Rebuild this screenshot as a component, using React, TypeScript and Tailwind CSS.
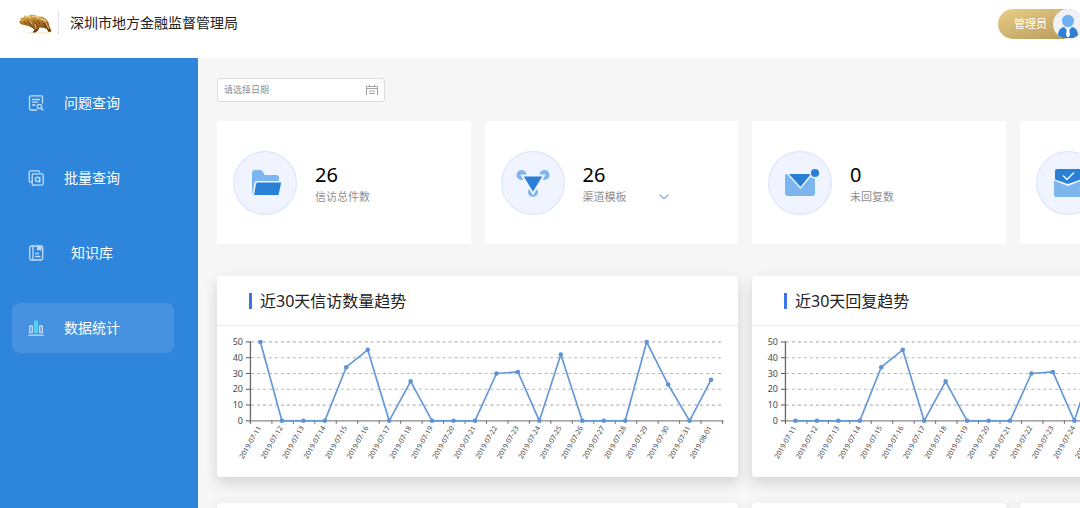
import type { ReactNode } from "react";
import clsx from "clsx";

const dates = [
  "2019-07-11", "2019-07-12", "2019-07-13", "2019-07-14", "2019-07-15", "2019-07-16",
  "2019-07-17", "2019-07-18", "2019-07-19", "2019-07-20", "2019-07-21", "2019-07-22",
  "2019-07-23", "2019-07-24", "2019-07-25", "2019-07-26", "2019-07-27", "2019-07-28",
  "2019-07-29", "2019-07-30", "2019-07-31", "2019-08-01",
];

const visits = [50, 0, 0, 0, 34, 45, 0, 25, 0, 0, 0, 30, 31, 0, 42, 0, 0, 0, 50, 23, 0, 26];
const replies = [0, 0, 0, 0, 34, 45, 0, 25, 0, 0, 0, 30, 31, 0, 42, 0, 0, 0, 50, 23, 0, 26];

function BullLogo() {
  return (
    <svg viewBox="0 0 34 22" className="h-[22px] w-[34px]" aria-hidden="true">
      <defs>
        <linearGradient id="bull" x1="0" y1="0" x2="0.2" y2="1">
          <stop offset="0" stopColor="#e3b55c" />
          <stop offset="0.5" stopColor="#b27a28" />
          <stop offset="1" stopColor="#69390f" />
        </linearGradient>
      </defs>
      <path d="M9 20.800h24" stroke="#f6e8ca" strokeWidth="1.200" />
      <path
        d="M1 9.500 3 8 2.500 5.500 5 6 7 3.500 10.500 4 13 2.500 17 3 20 4.500 24 4.800 28 7 30.500 10.500 31.500 14.500 33.500 19.500 30.500 20 28.500 16.800 25 15.800 21.500 15.500 20 18.500 17.500 20.500 14.500 20.500 16.500 17.500 13.500 15.500 10 14 6 13 2.500 12Z"
        fill="url(#bull)"
      />
      <path d="M7 5q4-1 6 1M14 4.500q4-1 7 2M22 7q4 0 6 3" stroke="#f6d894" strokeWidth="1.200" fill="none" />
      <path d="M5 9l4 3M9 8l4 5M15 8l4 5M19 8l3 4M25 11l4 4" stroke="#67370f" strokeWidth="1" fill="none" />
      <path d="M4 8l2 1M11 9l3 3M17 12l1 5M28 11l3 6" stroke="#eabb66" strokeWidth="1" fill="none" />
    </svg>
  );
}

function Avatar() {
  return (
    <svg viewBox="0 0 30 30" className="size-[30px] shrink-0" aria-hidden="true">
      <defs>
        <clipPath id="avatar">
          <circle cx="15" cy="15" r="15" />
        </clipPath>
      </defs>
      <circle cx="15" cy="15" r="15" fill="#f1f2f5" />
      <g clipPath="url(#avatar)">
        <path d="M5 29v-3q0-6 5.500-8h9q5.500 2 5.500 8v3Z" fill="#2f80d5" />
        <path d="M10.500 17.500h9L15 22Z" fill="#f1f2f5" />
        <path d="M14 18.500h2l1 8-2 2-2-2Z" fill="#fff" />
        <ellipse cx="15" cy="12" rx="6" ry="6.200" fill="#6fb0f3" />
      </g>
    </svg>
  );
}

function SidebarIcon({ children }: { children: ReactNode }) {
  return (
    <svg
      viewBox="0 0 16 16"
      className="size-4 shrink-0"
      fill="none"
      stroke="#c5def7"
      strokeWidth="1.300"
      strokeLinecap="round"
      strokeLinejoin="round"
      aria-hidden="true"
    >
      {children}
    </svg>
  );
}

const menu = [
  {
    name: "问题查询",
    icon: (
      <SidebarIcon>
        <path d="M14.500 8V1.800a1 1 0 0 0-1-1H3a1.500 1.500 0 0 0-1.500 1.500v11.200A1.500 1.500 0 0 0 3 15h5.500" />
        <path d="M4.500 4.500h7M4.500 7.200h5M4.500 10h2.500" />
        <circle cx="11.500" cy="11.500" r="2.200" />
        <path d="m13.200 13.200 1.800 1.800" />
      </SidebarIcon>
    ),
  },
  {
    name: "批量查询",
    icon: (
      <SidebarIcon>
        <path d="M3.500 12.200h-.8A1.500 1.500 0 0 1 1.200 10.700V2.200A1.500 1.500 0 0 1 2.700.8h7.500a1.500 1.500 0 0 1 1.500 1.400" />
        <rect x="4.200" y="3.800" width="11" height="11.400" rx="1.500" />
        <circle cx="9.500" cy="9.300" r="2.200" />
        <path d="M11.700 7.500v4.500" />
      </SidebarIcon>
    ),
  },
  {
    name: "知识库",
    icon: (
      <SidebarIcon>
        <rect x="1.700" y="1" width="13" height="14" rx="1.800" />
        <path d="M5 1v14M7.800 8.500h2.500M7.800 11.500h4.200" />
        <path d="M9.800 1.200v3.800l1.500-1.200 1.500 1.200V1.200" fill="#c5def7" />
      </SidebarIcon>
    ),
  },
  {
    name: "数据统计",
    active: true,
    icon: (
      <SidebarIcon>
        <rect x="1.700" y="6" width="2.600" height="6.500" />
        <rect x="11.700" y="6" width="2.600" height="6.500" />
        <rect x="6.600" y="1.200" width="2.800" height="11.300" fill="#4fd3f0" stroke="#4fd3f0" />
        <path d="M.8 15.200h14.400" />
      </SidebarIcon>
    ),
  },
];

function StatIcon({ children }: { children: ReactNode }) {
  return (
    <svg viewBox="0 0 64 64" className="size-16 shrink-0" aria-hidden="true">
      <circle cx="32" cy="32" r="31.400" fill="#eff4fe" stroke="#dfe6fa" strokeWidth="1.200" />
      {children}
    </svg>
  );
}

function StatCard({ icon, value, children }: { icon: ReactNode; value: number; children: ReactNode }) {
  return (
    <div className="flex h-[123px] items-center gap-[18px] rounded-xs bg-white pl-4">
      {icon}
      <div>
        <p className="text-xl leading-7 text-black">{value}</p>
        <div className="text-[11px] leading-4 text-[#8f8f8f]">{children}</div>
      </div>
    </div>
  );
}

function TrendCard({ title, values }: { title: string; values: number[] }) {
  const x = (i: number) => 43.5 + i * 21.5;
  const y = (v: number) => 95 - v * 1.58;

  return (
    <section className="col-span-2 rounded bg-white shadow-[0_6px_14px_rgba(0,0,0,0.14)]">
      <h2 className="flex h-[50px] items-center gap-2 border-b border-[#ececec] pl-8 text-base text-[#222]">
        <span className="h-4 w-[3px] bg-[#3f74e8]" />
        {title}
      </h2>
      <svg viewBox="0 0 522 151" className="block w-full" role="img" aria-label={title}>
        {[0, 10, 20, 30, 40, 50].map((v) => (
          <g key={v}>
            {v > 0 && (
              <path d={`M34 ${y(v)}H507`} stroke="#b9b4bb" strokeWidth="1.200" strokeDasharray="3 3" />
            )}
            <path d={`M29 ${y(v)}h5`} stroke="#555" strokeWidth="1" />
            <text x="26" y={y(v) + 3} fontSize="9" textAnchor="end" fill="#4a4a4a">
              {v}
            </text>
          </g>
        ))}
        <path d="M33.500 15.500V97.500" stroke="#6b6468" strokeWidth="1.300" />
        <path d="M33 95H507.500" stroke="#8a8a8a" strokeWidth="1.300" />
        {[...dates, ""].map((date, i) => (
          <path key={date} d={`M${33.5 + i * 21.5} 95v3`} stroke="#666" strokeWidth="1" />
        ))}
        {dates.map((date, i) => (
          <text
            key={date}
            transform={`translate(${x(i) + 1} 102) rotate(-60)`}
            fontSize="7"
            textAnchor="end"
            fill="#444"
          >
            {date}
          </text>
        ))}
        <polyline
          points={values.map((v, i) => `${x(i)},${y(v)}`).join(" ")}
          fill="none"
          stroke="#6599d8"
          strokeWidth="1.700"
          strokeLinejoin="round"
        />
        {values.map((v, i) => (
          <circle key={i} cx={x(i)} cy={y(v)} r="2.300" fill="#5f92d6" />
        ))}
      </svg>
    </section>
  );
}

export default function App() {
  return (
    <div className="flex h-screen flex-col overflow-hidden bg-[#f6f6f7] font-['Noto_Sans','Noto_Sans_CJK_SC',sans-serif]">
      <header className="flex h-[58px] shrink-0 items-start justify-between bg-white pl-[18px]">
        <div className="flex h-[46px] items-center">
          <BullLogo />
          <span className="ml-1.5 h-6 w-px bg-[#e4e4e4]" />
          <h1 className="ml-[11px] text-sm text-[#222]">深圳市地方金融监督管理局</h1>
        </div>
        <button className="-mr-[3px] mt-[9px] flex h-[30px] items-center gap-1.5 rounded-full bg-linear-to-br from-[#e8cf88] to-[#b59558] pl-4 text-[11px] text-white">
          管理员
          <Avatar />
        </button>
      </header>

      <div className="flex min-h-0 flex-1">
        <nav className="flex w-[198px] shrink-0 flex-col gap-[25px] bg-[#2d85dc] pt-5 pr-6 pl-3">
          {menu.map((item) => (
            <a
              key={item.name}
              href="#"
              className={clsx(
                "flex h-[50px] items-center gap-5 rounded-lg pl-4 text-sm text-white",
                item.active && "bg-[#4691e0]"
              )}
            >
              {item.icon}
              <span className="w-14 text-center">{item.name}</span>
            </a>
          ))}
        </nav>

        <main className="min-w-0 flex-1 overflow-hidden pt-5 pl-[19px]">
          <label className="flex h-6 w-[168px] items-center rounded-[3px] border border-[#dcdcdc] bg-white px-1.5">
            <input
              type="text"
              aria-label="请选择日期"
              placeholder="请选择日期"
              className="min-w-0 flex-1 text-[9px] outline-none placeholder:text-[#8c8c8c]"
            />
            <svg viewBox="0 0 12 10" className="h-2.5 w-3" fill="none" stroke="#a3a3a3" aria-hidden="true">
              <path d="M.5 10V1.500h11V10M.5 3.500h11M3.500 0v2M8.500 0v2M3 6h6M3 8.500h6" />
            </svg>
          </label>

          <div className="mt-[19px] grid min-w-[1056px] grid-cols-4 gap-x-3.5">
            <StatCard
              value={26}
              icon={
                <StatIcon>
                  <path d="M19 45V22q0-3 3-3h5q2 0 3 2l1.500 3H43q3 0 3 3v3H24q-2 0-2.500 2Z" fill="#7db5f0" />
                  <path d="M24.500 31.500H47q1.300 0 1 1.300L45.500 44H21l2-11q.2-1.500 1.500-1.500Z" fill="#2a82d8" />
                </StatIcon>
              }
            >
              信访总件数
            </StatCard>
            <StatCard
              value={26}
              icon={
                <StatIcon>
                  <circle cx="20.500" cy="24" r="5" fill="#7db5ef" />
                  <circle cx="43.500" cy="24" r="5" fill="#7db5ef" />
                  <circle cx="32" cy="41" r="5" fill="#7db5ef" />
                  <path d="M21 24.500h22L32 42.500Z" fill="#2a80d9" stroke="#eff4fe" strokeWidth="2" />
                </StatIcon>
              }
            >
              <div className="relative w-[86px]">
                <select aria-label="渠道模板" className="block w-full appearance-none outline-none">
                  <option>渠道模板</option>
                </select>
                <svg
                  viewBox="0 0 10 6"
                  className="pointer-events-none absolute top-[5px] right-0 h-1.5 w-2.5"
                  fill="none"
                  stroke="#86aadc"
                  strokeWidth="1.200"
                  aria-hidden="true"
                >
                  <path d="m.5.8 4.500 4 4.500-4" />
                </svg>
              </div>
            </StatCard>
            <StatCard
              value={0}
              icon={
                <StatIcon>
                  <path d="M18.500 23H44q3 0 3 3v16q0 3-3 3H20q-3 0-3-3V25q0-2 1.500-2Z" fill="#7db5ef" />
                  <path d="M20.500 23H44L32.500 36Z" fill="#2a80d6" />
                  <path d="m19 22 13.500 15L44 23" fill="none" stroke="#eff4fe" strokeWidth="1.400" />
                  <circle cx="47" cy="22" r="4.800" fill="#2a80d6" stroke="#eff4fe" strokeWidth="1.400" />
                </StatIcon>
              }
            >
              未回复数
            </StatCard>
            <StatCard
              value={26}
              icon={
                <StatIcon>
                  <path d="M18 29.500 32 35l14-5.500V44q0 2-2 2H20q-2 0-2-2Z" fill="#7db5ef" />
                  <path d="M21 18h22q2 0 2 2v8.500L32 33l-13-4.500V20q0-2 2-2Z" fill="#2a80d6" />
                  <path d="m27 24.500 4 4 7-7" fill="none" stroke="#eff4fe" strokeWidth="1.500" />
                </StatIcon>
              }
            >
              已回复数
            </StatCard>
          </div>

          <div className="mt-8 grid min-w-[1056px] grid-cols-4 gap-x-3.5 gap-y-[26px]">
            <TrendCard title="近30天信访数量趋势" values={visits} />
            <TrendCard title="近30天回复趋势" values={replies} />
            <div className="col-span-2 h-[200px] rounded bg-white shadow-[0_6px_14px_rgba(0,0,0,0.14)]" />
            <div className="h-[200px] rounded bg-white shadow-[0_6px_14px_rgba(0,0,0,0.14)]" />
            <div className="h-[200px] rounded bg-white shadow-[0_6px_14px_rgba(0,0,0,0.14)]" />
          </div>
        </main>
      </div>
    </div>
  );
}
